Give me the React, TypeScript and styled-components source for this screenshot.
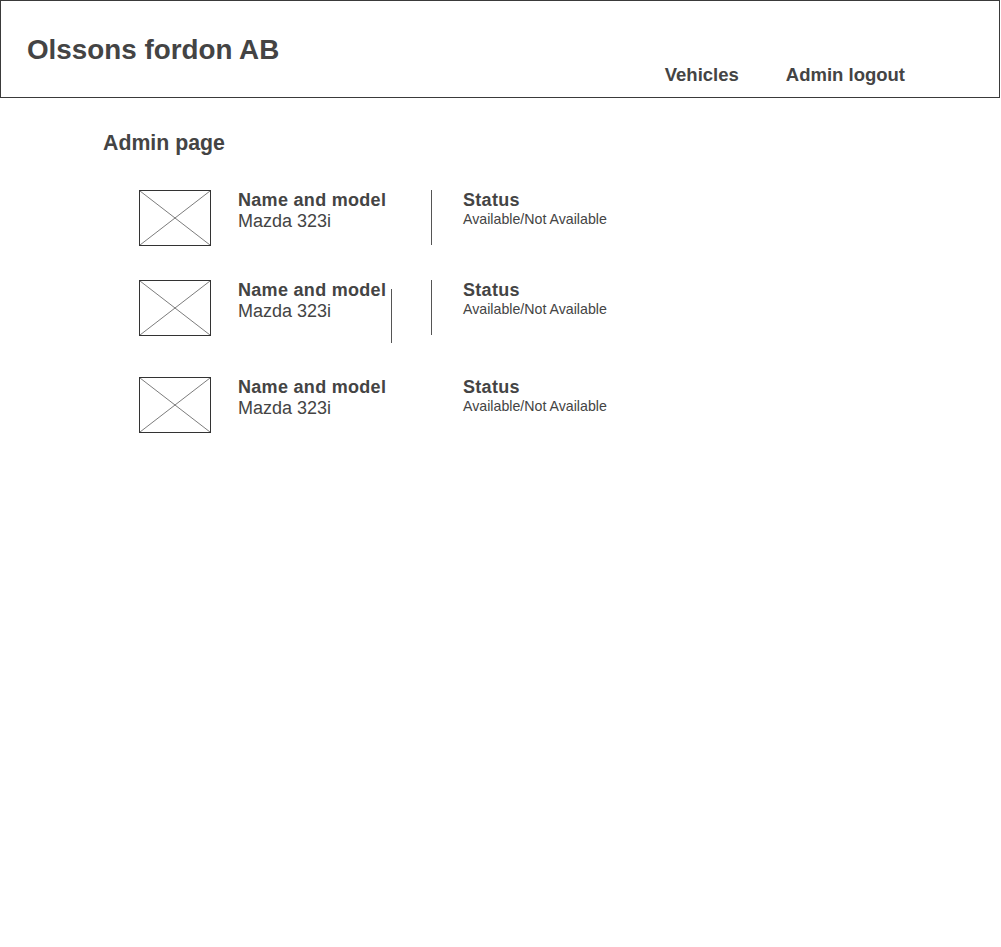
import styled, { createGlobalStyle } from "styled-components";

const GlobalStyle = createGlobalStyle`
  body {
    margin: 0;
    background: #fff;
    font-family: "Liberation Sans", Arial, sans-serif;
    color: #444;
  }
`;

const vehicles = [
  { id: 1, name: "Mazda 323i", stray: false, divider: true },
  { id: 2, name: "Mazda 323i", stray: true, divider: true },
  { id: 3, name: "Mazda 323i", stray: false, divider: false },
];

function Placeholder() {
  return (
    <ImageBox>
      <svg width="100%" height="100%" viewBox="0 0 72 56" preserveAspectRatio="none">
        <line x1="0" y1="0" x2="72" y2="56" stroke="#555" strokeWidth="0.8" />
        <line x1="72" y1="0" x2="0" y2="56" stroke="#555" strokeWidth="0.8" />
      </svg>
    </ImageBox>
  );
}

export default function App() {
  return (
    <>
      <GlobalStyle />
      <Header>
        <Brand>Olssons fordon AB</Brand>
        <Nav>
          <NavLink>Vehicles</NavLink>
          <NavLink>Admin logout</NavLink>
        </Nav>
      </Header>
      <Main>
        <PageTitle>Admin page</PageTitle>
        <List>
          {vehicles.map((v) => (
            <Row key={v.id}>
              <Placeholder />
              <NameCell>
                <TextBlock>
                  <Label>Name and model</Label>
                  <Value>{v.name}</Value>
                </TextBlock>
                {v.stray && <StrayLine />}
              </NameCell>
              <Divider $visible={v.divider} />
              <StatusCell>
                <Label>Status</Label>
                <Small>Available/Not Available</Small>
              </StatusCell>
            </Row>
          ))}
        </List>
      </Main>
    </>
  );
}

const Header = styled.header`
  display: flex;
  align-items: flex-start;
  width: 1000px;
  height: 98px;
  box-sizing: border-box;
  border: 1px solid #3a3a3a;
  padding: 35px 94px 0 26px;
`;

const Brand = styled.h1`
  margin: 0;
  font-size: 27.8px;
  line-height: 1;
  font-weight: bold;
`;

const Nav = styled.nav`
  display: flex;
  gap: 47px;
  margin-left: auto;
  margin-top: 30px;
`;

const NavLink = styled.span`
  font-size: 18.5px;
  line-height: 1;
  font-weight: bold;
  cursor: pointer;
`;

const Main = styled.main`
  padding: 35px 0 0 103px;
`;

const PageTitle = styled.h2`
  margin: 0;
  font-size: 21.3px;
  line-height: 1;
  font-weight: bold;
`;

const List = styled.div`
  display: flex;
  flex-direction: column;
  align-items: flex-start;
  gap: 34px;
  margin-top: 36px;
  padding-left: 36px;
`;

const Row = styled.div`
  display: flex;
  align-items: flex-start;
`;

const ImageBox = styled.div`
  width: 72px;
  height: 56px;
  box-sizing: border-box;
  border: 1px solid #333;
  margin-right: 27px;

  svg {
    display: block;
  }
`;

const NameCell = styled.div`
  display: flex;
  width: 193px;
`;

const TextBlock = styled.div`
  display: flex;
  flex-direction: column;
  width: 153px;
`;

const Label = styled.span`
  font-size: 18px;
  line-height: 20px;
  font-weight: bold;
  letter-spacing: 0.3px;
  white-space: nowrap;
`;

const Value = styled.span`
  font-size: 18px;
  line-height: 22px;
`;

const StrayLine = styled.div`
  width: 1px;
  height: 54px;
  margin-top: 9px;
  background: #555;
`;

const Divider = styled.div<{ $visible: boolean }>`
  width: 1px;
  height: 55px;
  background: ${(p) => (p.$visible ? "#555" : "transparent")};
  margin-right: 31px;
`;

const StatusCell = styled.div`
  display: flex;
  flex-direction: column;
`;

const Small = styled.span`
  font-size: 14.2px;
  line-height: 18px;
  white-space: nowrap;
`;
